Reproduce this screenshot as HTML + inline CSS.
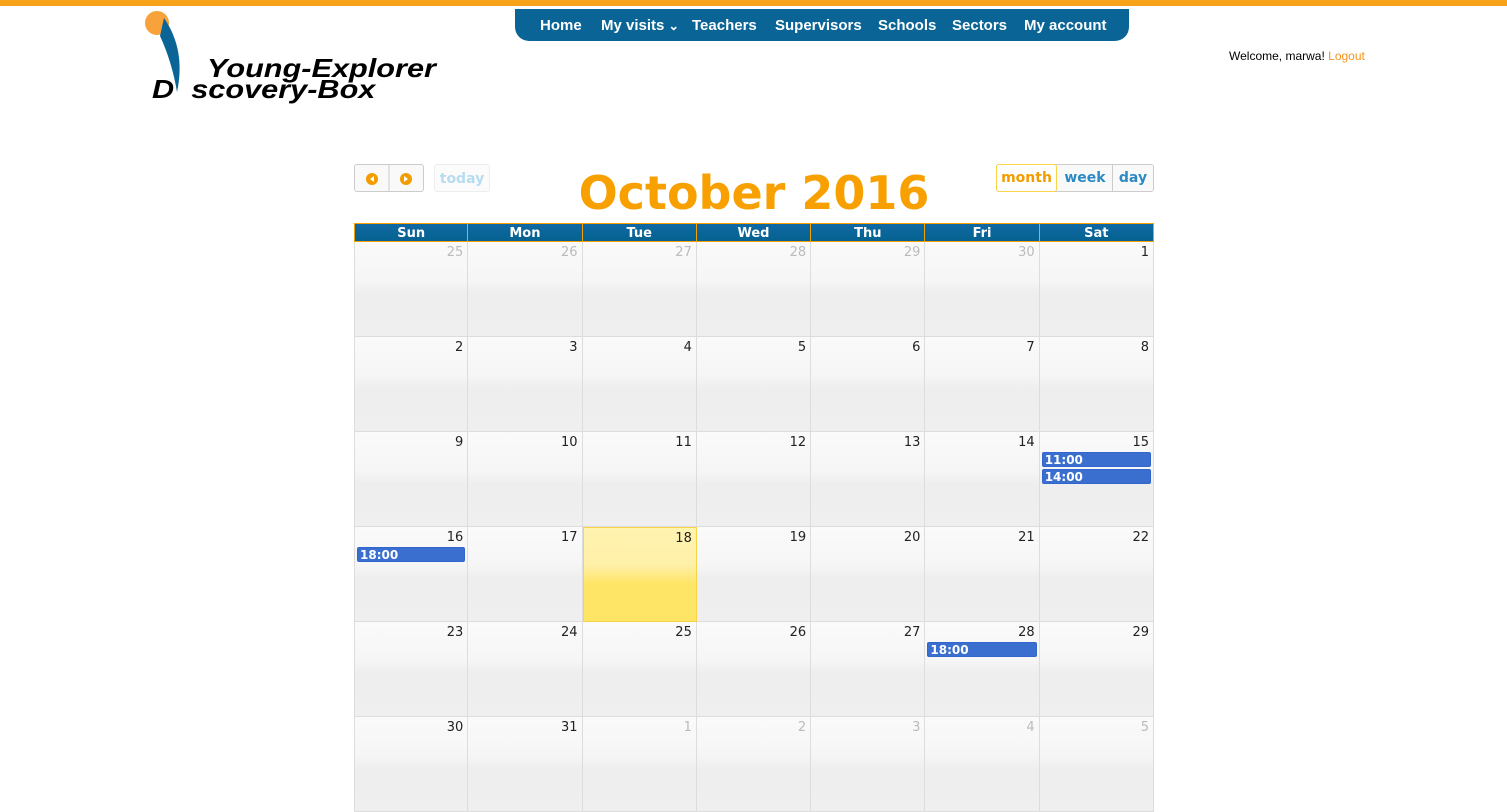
<!DOCTYPE html>
<html><head><meta charset="utf-8"><style>
body{margin:0;width:1507px;height:774px;overflow:hidden;background:#fff;font-family:"DejaVu Sans","Liberation Sans",sans-serif;position:relative}
.top{position:absolute;left:0;top:0;width:1507px;height:6px;background:#f7a21b}
.nav{position:absolute;left:515px;top:9px;width:614px;height:32px;background:#0a6596;border-radius:0 0 14px 14px;color:#fff;font-size:15px;font-weight:bold;font-family:"Liberation Sans",sans-serif}
.nav span{position:absolute;top:8px;white-space:nowrap}
.logo{position:absolute;left:140px;top:10px}
.lt{position:absolute;font-family:"Liberation Sans",sans-serif;font-weight:900;font-style:italic;font-size:26px;color:#000;white-space:nowrap;line-height:26px;transform-origin:0 0;transform:scaleX(1.18)}
.welcome{position:absolute;left:1229px;top:49px;font-family:"Liberation Sans",sans-serif;font-size:12px}
.welcome a{color:#f7931e}
.btn{position:absolute;top:164px;height:28px;border:1px solid #ccc;border-radius:3px;background:#f9f9f9;box-sizing:border-box}
.title{position:absolute;left:354px;width:800px;top:166px;text-align:center;font-size:46px;font-weight:bold;color:#f7a000;white-space:nowrap}
.grid{position:absolute;left:354px;top:223px;width:800px;display:grid;grid-template-columns:repeat(7,1fr)}
.h{height:19px;background:linear-gradient(#1168a3,#04628f);color:#fff;font-weight:bold;font-size:13px;text-align:center;line-height:19px;border-right:1px solid #f7a000;border-top:1px solid #f7a000;border-bottom:1px solid #f7a000;box-sizing:border-box}
.h:first-child{border-left:1px solid #f7a000}
.c{height:95px;border-right:1px solid #ddd;border-bottom:1px solid #ddd;box-sizing:border-box;background:linear-gradient(#fafafa 0,#f6f6f6 40%,#eeeeee 55%,#efefef 100%);position:relative;text-align:right;padding:3px 4px 0 0;font-size:13px;color:#222}
.c:nth-child(7n+1){border-left:1px solid #ddd}
.o{color:#bbb}
.t{background:linear-gradient(#fff3b0 0,#fff0a8 40%,#ffe566 60%,#ffe566 100%);border:1px solid #f7d44a}
.e{position:absolute;left:2px;right:2px;height:15px;background:#3a6fd0;border:1px solid #3366cc;border-radius:2px;color:#fff;font-weight:bold;font-size:12px;text-align:left;padding-left:2px;line-height:14px;box-sizing:border-box}
</style></head><body>
<div class="top"></div>
<div class="nav"><span style="left:25px">Home</span><span style="left:86px">My visits <small>⌄</small></span><span style="left:177px">Teachers</span><span style="left:260px">Supervisors</span><span style="left:363px">Schools</span><span style="left:437px">Sectors</span><span style="left:509px">My account</span></div>
<div class="logo">
<svg width="60" height="90" style="position:absolute;left:0;top:0"><circle cx="17" cy="13" r="12" fill="#f7a23a"/><path d="M24 8 Q46 40 37 82 Q32 52 20 26 Z" fill="#0a6596"/></svg>
<div class="lt" style="left:67px;top:45px">Young-Explorer</div>
<div class="lt" style="left:12px;top:66px">D&nbsp;&nbsp;scovery-Box</div>
</div>
<div class="welcome">Welcome, marwa! <a>Logout</a></div>
<div class="btn" style="left:354px;width:70px"><svg width="70" height="27"><circle cx="17" cy="14" r="6" fill="#f39c00"/><path d="M19 11 L15 14 L19 17Z" fill="#fff"/><line x1="34" y1="0" x2="34" y2="27" stroke="#ccc"/><circle cx="51" cy="14" r="6" fill="#f39c00"/><path d="M49 11 L53 14 L49 17Z" fill="#fff"/></svg></div>
<div class="btn" style="left:434px;width:56px;background:#fbfbfb;border-color:#eee;color:#b5dcef;font-weight:bold;font-size:14px;text-align:center;line-height:28px">today</div>
<div class="title">October 2016</div>
<div class="btn" style="left:996px;width:158px;font-weight:bold;font-size:14px;line-height:28px;color:#2b8ac4"><span style="position:absolute;width:61px;height:28px;border:1px solid #f7d44a;border-radius:3px;top:-1px;left:-1px;text-align:center;color:#f39c00;background:#fff;box-sizing:border-box;line-height:27px">month</span><span style="position:absolute;left:61px;width:54px;text-align:center;border-right:1px solid #ccc;line-height:26px">week</span><span style="position:absolute;left:116px;width:40px;text-align:center;line-height:26px">day</span></div>
<div class="grid">
<div class="h">Sun</div><div class="h">Mon</div><div class="h">Tue</div><div class="h">Wed</div><div class="h">Thu</div><div class="h">Fri</div><div class="h">Sat</div>
<div class="c o">25</div><div class="c o">26</div><div class="c o">27</div><div class="c o">28</div><div class="c o">29</div><div class="c o">30</div><div class="c">1</div>
<div class="c">2</div><div class="c">3</div><div class="c">4</div><div class="c">5</div><div class="c">6</div><div class="c">7</div><div class="c">8</div>
<div class="c">9</div><div class="c">10</div><div class="c">11</div><div class="c">12</div><div class="c">13</div><div class="c">14</div><div class="c">15<div class="e" style="top:20px">11:00</div><div class="e" style="top:37px">14:00</div></div>
<div class="c">16<div class="e" style="top:20px">18:00</div></div><div class="c">17</div><div class="c t">18</div><div class="c">19</div><div class="c">20</div><div class="c">21</div><div class="c">22</div>
<div class="c">23</div><div class="c">24</div><div class="c">25</div><div class="c">26</div><div class="c">27</div><div class="c">28<div class="e" style="top:20px">18:00</div></div><div class="c">29</div>
<div class="c">30</div><div class="c">31</div><div class="c o">1</div><div class="c o">2</div><div class="c o">3</div><div class="c o">4</div><div class="c o">5</div>
</div>
</body></html>
